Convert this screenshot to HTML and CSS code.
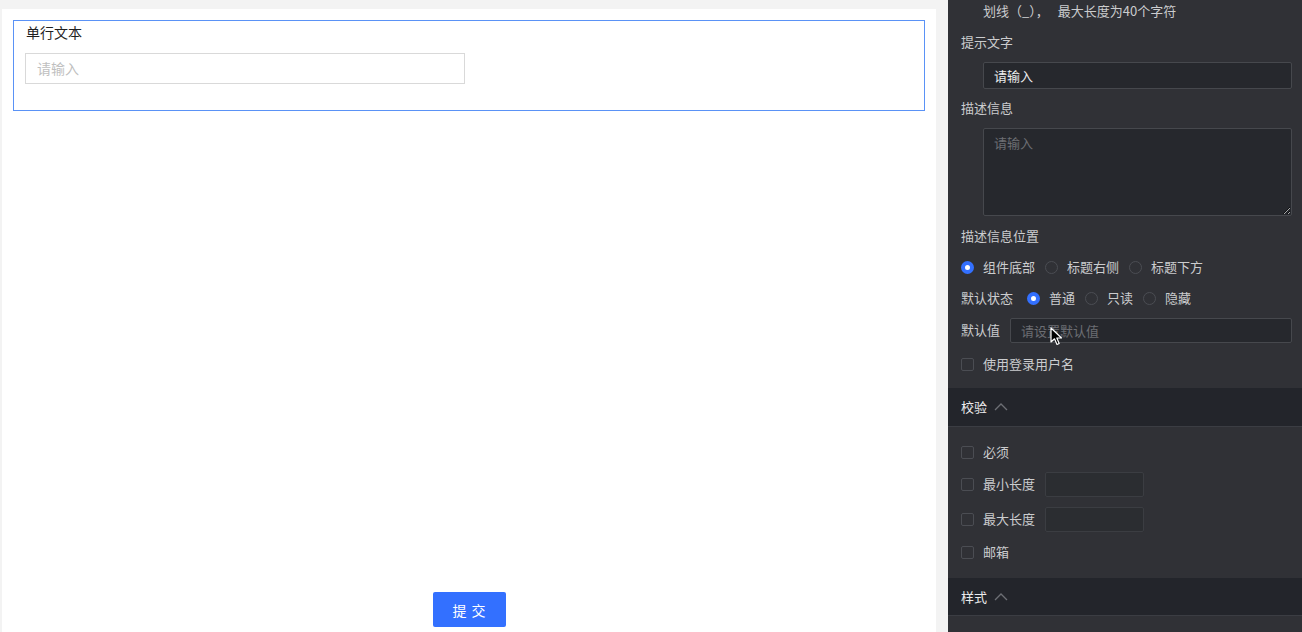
FILE: index.html
```html
<!DOCTYPE html>
<html lang="zh-CN">
<head>
    <meta charset="UTF-8">
    <meta name="viewport" content="width=device-width, initial-scale=1.0">
    <title>表单设计</title>
    <link rel="stylesheet" href="styles.css">
</head>
<body>
    <main class="canvas">
        <div class="field selected">
            <div class="field-title">单行文本</div>
            <input class="field-input" type="text" placeholder="请输入">
        </div>
        <div class="canvas-footer">
            <button class="submit">提 交</button>
        </div>
    </main>

    <aside class="panel">
        <div class="note">划线<span class="punct">（_），</span>最大长度为40个字符</div>

        <div class="label gap-7">提示文字</div>
        <input class="dark-input wide gap-7" type="text" value="请输入">

        <div class="label gap-8">描述信息</div>
        <textarea class="dark-input area gap-7" placeholder="请输入"></textarea>

        <div class="label gap-9">描述信息位置</div>
        <div class="row gap-6">
            <span class="radio checked"></span><span class="opt">组件底部</span>
            <span class="radio"></span><span class="opt">标题右侧</span>
            <span class="radio"></span><span class="opt">标题下方</span>
        </div>

        <div class="row gap-7">
            <span class="row-label">默认状态</span>
            <span class="radio checked"></span><span class="opt">普通</span>
            <span class="radio"></span><span class="opt">只读</span>
            <span class="radio"></span><span class="opt">隐藏</span>
        </div>

        <div class="row value-row gap-8">
            <span class="row-label">默认值</span>
            <input class="dark-input grow" type="text" placeholder="请设置默认值">
        </div>

        <div class="row gap-9">
            <span class="checkbox"></span><span class="opt">使用登录用户名</span>
        </div>

        <div class="section-head gap-12">
            <span>校验</span>
            <svg class="chevron" width="14" height="8" viewBox="0 0 14 8"><path d="M1 7 L7 1 L13 7" fill="none" stroke="#6d6f75" stroke-width="1.3"/></svg>
        </div>

        <div class="row gap-13">
            <span class="checkbox"></span><span class="opt">必须</span>
        </div>
        <div class="row len-row gap-8">
            <span class="checkbox"></span><span class="opt">最小长度</span>
            <input class="dark-input short" type="text">
        </div>
        <div class="row len-row gap-10">
            <span class="checkbox"></span><span class="opt">最大长度</span>
            <input class="dark-input short" type="text">
        </div>
        <div class="row gap-8">
            <span class="checkbox"></span><span class="opt">邮箱</span>
        </div>

        <div class="section-head gap-14 short-head">
            <span>样式</span>
            <svg class="chevron" width="14" height="8" viewBox="0 0 14 8"><path d="M1 7 L7 1 L13 7" fill="none" stroke="#6d6f75" stroke-width="1.3"/></svg>
        </div>

        <!-- mouse pointer hovering the default value field -->
        <svg class="cursor" width="14" height="20" viewBox="0 0 14 20">
            <path d="M1 1 L1 15 L4.5 11.8 L7 17.5 L9.2 16.5 L6.8 11 L11.5 11 Z" fill="#000" stroke="#fff" stroke-width="1.2" stroke-linejoin="round"/>
        </svg>
    </aside>
</body>
</html>
```

FILE: styles.css
```css
body {
    margin: 0;
    height: 632px;
    overflow: hidden;
    display: flex;
    background-color: #f3f3f3;
    font-family: "Noto Sans CJK SC", "Noto Sans", sans-serif;
    font-size: 13px;
}

/* form canvas */
.canvas {
    width: 934px;
    margin: 9px 0 0 2px;
    background-color: #fff;
    display: flex;
    flex-direction: column;
}
.field {
    margin: 11px 11px 0 11px;
    height: 89px;
    padding: 0 11px;
    border: 1px solid #5a92f6;
}
.field-title {
    font-size: 14px;
    color: #1f1f1f;
    height: 24px;
    line-height: 22px;
    padding-left: 1px;
}
.field-input {
    display: block;
    box-sizing: border-box;
    width: 440px;
    height: 31px;
    margin-top: 8px;
    padding: 0 11px 2px;
    border: 1px solid #d9d9d9;
    font-family: inherit;
    font-size: 14px;
    outline: none;
}
.field-input::placeholder {
    color: #bfbfbf;
}
.canvas-footer {
    margin-top: auto;
    display: flex;
    justify-content: center;
    padding-bottom: 5px;
}
.submit {
    width: 73px;
    height: 35px;
    border: none;
    border-radius: 2px;
    background-color: #3370ff;
    color: #fff;
    font-family: inherit;
    font-size: 14px;
    letter-spacing: 1px;
    margin-left: 1px;
}

/* properties panel */
.panel {
    position: relative;
    margin-left: 12px;
    width: 354px;
    background-color: #303136;
    color: #cbccce;
    display: flex;
    flex-direction: column;
}
.note {
    height: 24px;
    line-height: 22px;
    padding-left: 35px;
}
.note .punct {
    margin-right: 9px;
}
.label {
    height: 24px;
    line-height: 22px;
    padding-left: 13px;
}
.gap-6 { margin-top: 6px; }
.gap-7 { margin-top: 7px; }
.gap-8 { margin-top: 8px; }
.gap-9 { margin-top: 9px; }
.gap-10 { margin-top: 10px; }
.gap-12 { margin-top: 12px; }
.gap-13 { margin-top: 13px; }
.gap-14 { margin-top: 14px; }

.dark-input {
    box-sizing: border-box;
    background-color: #26282d;
    border: 1px solid #46484d;
    border-radius: 2px;
    color: #eceded;
    font-family: inherit;
    font-size: 13px;
    outline: none;
    padding: 0 10px;
}
.dark-input::placeholder {
    color: #6c6e73;
}
.wide {
    margin-left: 35px;
    width: 309px;
    height: 27px;
}
.area {
    display: block;
    margin-left: 35px;
    width: 309px;
    height: 88px;
    padding: 4px 10px;
    resize: vertical;
}
.grow {
    flex: 1;
    height: 25px;
    margin-right: 10px;
}
.short {
    width: 99px;
    height: 25px;
    margin-left: 10px;
    background-color: #2b2d31;
    border-color: #3b3d42;
}

.row {
    height: 24px;
    display: flex;
    align-items: center;
    padding-left: 13px;
}
.value-row,
.len-row {
    height: 25px;
}
.opt,
.row-label {
    padding-bottom: 2px;
}
.row-label {
    margin-right: 14px;
}
.value-row .row-label {
    margin-right: 10px;
    padding-bottom: 3px;
}
.opt {
    margin-right: 10px;
}
.radio {
    box-sizing: border-box;
    width: 13px;
    height: 13px;
    border-radius: 50%;
    border: 1px solid #4b4d53;
    margin-right: 9px;
}
.radio.checked {
    border: 4px solid #3370ff;
    background-color: #fff;
}
.checkbox {
    box-sizing: border-box;
    width: 13px;
    height: 13px;
    border: 1px solid #4b4d53;
    border-radius: 2px;
    margin-right: 9px;
}
.len-row .opt {
    margin-right: 0;
}

.section-head {
    height: 38px;
    display: flex;
    align-items: center;
    padding-left: 13px;
    background-color: #23252b;
    border-bottom: 1px solid #3b3d43;
    color: #ececed;
}
.section-head span {
    padding-bottom: 1px;
}
.chevron {
    margin-left: 7px;
}
.short-head {
    height: 37px;
}

.cursor {
    position: absolute;
    left: 102px;
    top: 327px;
}
```
